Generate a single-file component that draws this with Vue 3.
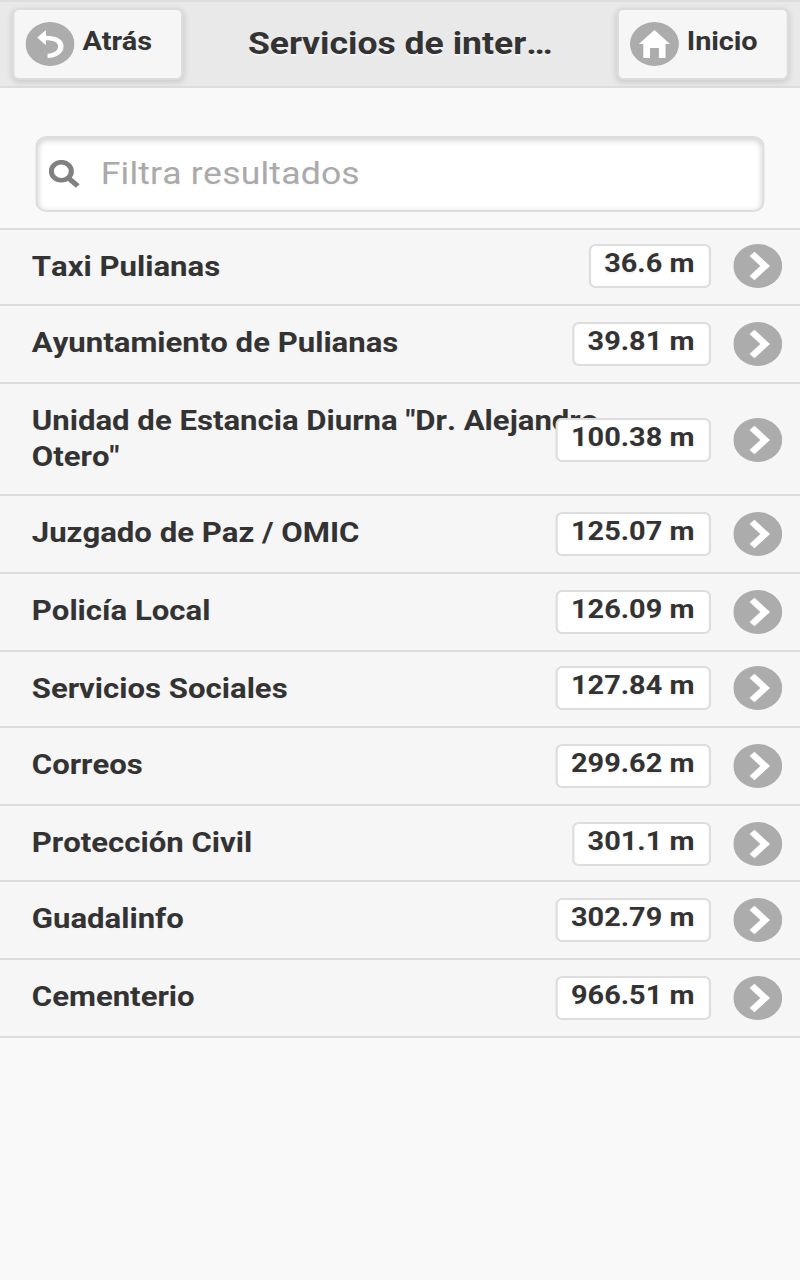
<script setup>
const services = [
  { name: 'Taxi Pulianas', distance: '36.6 m', size: 'short', raised: true },
  { name: 'Ayuntamiento de Pulianas', distance: '39.81 m', size: 'normal' },
  { name: 'Unidad de Estancia Diurna "Dr. Alejandro Otero"', distance: '100.38 m', size: 'double' },
  { name: 'Juzgado de Paz / OMIC', distance: '125.07 m', size: 'normal' },
  { name: 'Policía Local', distance: '126.09 m', size: 'normal' },
  { name: 'Servicios Sociales', distance: '127.84 m', size: 'short', raised: true },
  { name: 'Correos', distance: '299.62 m', size: 'normal' },
  { name: 'Protección Civil', distance: '301.1 m', size: 'short' },
  { name: 'Guadalinfo', distance: '302.79 m', size: 'normal' },
  { name: 'Cementerio', distance: '966.51 m', size: 'normal' }
]
</script>

<template>
  <div class="page">
    <header class="bar">
      <a class="btn back">
        <svg class="disc" viewBox="0 0 44 44">
          <circle cx="22" cy="22" r="22" fill="#acacac" />
          <path d="M10.5 15.5 L18.3 8 V13.7 C28 13.7 34.2 17.5 34.2 24.2 C34.2 31 28.5 35.5 19.8 36 V31.8 C25.5 31.3 29.3 28.6 29.3 24.6 C29.3 20.2 25.5 18.2 18.3 18.2 V23.3 Z" fill="#fff" />
        </svg>
        <span>Atrás</span>
      </a>
      <h1>Servicios de inter…</h1>
      <a class="btn home">
        <svg class="disc" viewBox="0 0 44 44">
          <circle cx="22" cy="22" r="22" fill="#acacac" />
          <path d="M22 8 L36 22 H32 V36 H26 V26 H18 V36 H12 V22 H8 Z" fill="#fff" />
        </svg>
        <span>Inicio</span>
      </a>
    </header>
    <div class="search">
      <svg class="lens" viewBox="0 0 28 28">
        <circle cx="11.2" cy="11.2" r="9" fill="none" stroke="#808080" stroke-width="4.6" />
        <path d="M17.5 18 L26 26" stroke="#808080" stroke-width="5" />
      </svg>
      <span>Filtra resultados</span>
    </div>
    <ul class="list">
      <li v-for="s in services" :key="s.name" :class="[s.size, { raised: s.raised }]">
        <span class="name">{{ s.name }}</span>
        <div class="aside">
          <span class="badge">{{ s.distance }}</span>
          <svg class="disc" viewBox="0 0 44 44">
            <circle cx="22" cy="22" r="22" fill="#acacac" />
            <path d="M16.8 9.9 L28.7 22 L16.8 34.1" fill="none" stroke="#fff" stroke-width="6.2" />
          </svg>
        </div>
      </li>
    </ul>
  </div>
</template>

<style>
html, body { margin: 0; background: #f9f9f9; overflow-x: hidden; }
</style>

<style scoped>
/* A 720-unit layout widened to fill the 800px viewport. */
.page {
  width: 720px;
  height: 1280px;
  transform: scaleX(1.11111);
  transform-origin: 0 0;
  background: #f9f9f9;
  color: #333;
  font-family: Roboto, "Liberation Sans", sans-serif;
  font-weight: 700;
  font-kerning: none;
  text-shadow: 0 2px 0 #f3f3f3;
}
.page * { box-sizing: border-box; }
.disc { display: block; flex: none; width: 44px; height: 44px; }
.bar {
  display: flex;
  justify-content: space-between;
  box-sizing: border-box;
  height: 88px;
  padding: 6px 10px 0 10.5px;
  background: #e9e9e9;
  border-top: 2px solid #ddd;
  border-bottom: 2px solid #ddd;
}
.btn {
  display: flex;
  height: 72px;
  padding: 12px 0 0 10px;
  background: #f6f6f6;
  border: 2px solid #ddd;
  border-radius: 6px;
  box-shadow: 0 2px 6px rgba(0, 0, 0, .15);
  font-size: 26px;
  line-height: 38px;
  letter-spacing: -.1px;
}
.btn span { margin-left: 7.7px; }
.back { width: 154px; }
.home { width: 155.5px; }
h1 { margin: 0; font-size: 32px; line-height: 40px; padding: 15px 0 0 1.5px; white-space: nowrap; }
.search {
  display: flex;
  height: 76px;
  margin: 48px 31.6px 16px 32.4px;
  border: 2px solid #ddd;
  border-radius: 10px;
  background: #fff;
  box-shadow: inset 0 2px 6px rgba(0, 0, 0, .2);
  color: #aaa;
  font-size: 32px;
  font-weight: 400;
  line-height: 70px;
  letter-spacing: .17px;
  text-shadow: 0 2px 0 #f9f9f9;
}
.lens { width: 28px; height: 28px; margin: 22px 18.3px 0 10px; }
.list { list-style: none; margin: 0; padding: 0; border-bottom: 2px solid #ddd; }
li { position: relative; border-top: 2px solid #ddd; background: #f6f6f6; padding: 19px 120px 0 28.6px; }
.name { display: block; font-size: 28px; line-height: 36px; }
.short { height: 76px; }
.normal { height: 78px; }
.double { height: 112px; }
/* The distance overlaps the end of a long name. */
.aside { position: absolute; top: 16px; right: 15.6px; display: flex; gap: 20px; }
.raised .aside { top: 14px; }
.double .aside { top: 34px; }
.badge {
  height: 44px;
  padding: 0 13.4px 0 12px;
  background: #fff;
  border: 2px solid #ddd;
  border-radius: 6px;
  font-size: 26px;
  line-height: 34px;
  white-space: nowrap;
}
</style>
